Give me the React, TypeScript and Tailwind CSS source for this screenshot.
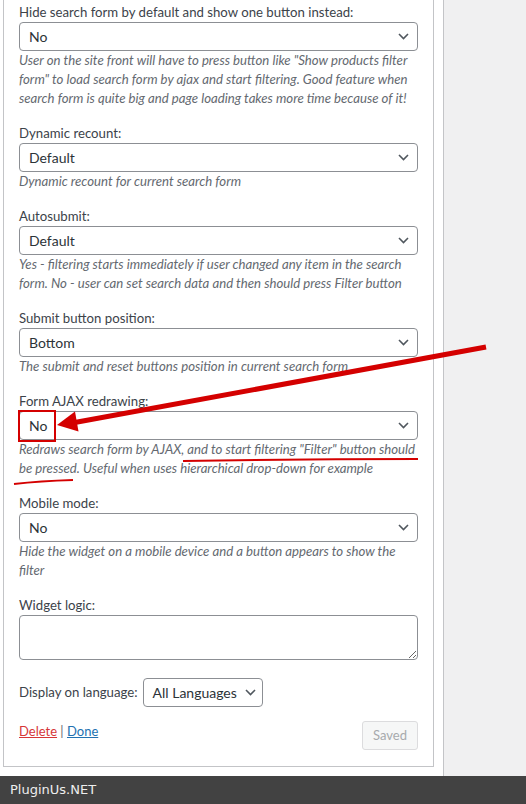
import React from "react";

const font = { fontFamily: 'Lato, "Liberation Sans", Arial, sans-serif' };

function Chevron() {
  return (
    <svg width="11" height="7" viewBox="0 0 11 7" className="shrink-0">
      <path d="M1 1 L5.5 5.5 L10 1" fill="none" stroke="#50575e" strokeWidth="1.6" />
    </svg>
  );
}

function Select({ value, className = "" }: { value: string; className?: string }) {
  return (
    <div
      className={`flex h-[29px] items-center justify-between whitespace-nowrap rounded-[4px] border border-[#8c8f94] bg-white pl-[9px] pr-[8px] text-[14px] text-[#2c3338] ${className}`}
    >
      <span>{value}</span>
      <Chevron />
    </div>
  );
}

function Field({ label, value, lines }: { label: string; value: string; lines: string[] }) {
  return (
    <div className="mb-[15px]">
      <div className="h-5 text-[13.2px] leading-5 text-[#3c434a]">{label}</div>
      <Select value={value} />
      <p className="text-[13.2px] italic leading-[19px] text-[#646970]">
        {lines.map((l, i) => (
          <span key={i} className="block whitespace-nowrap">
            {l}
          </span>
        ))}
      </p>
    </div>
  );
}

export default function App() {
  return (
    <div className="relative flex h-[804px] w-[526px] flex-col overflow-hidden bg-white" style={font}>
      <div className="flex h-[776px]">
        <div className="w-[444px] shrink-0 border-r border-[#c3c4c7] bg-white">
          <div className="ml-[3px] w-[431px] border-x border-b border-[#c3c4c7] bg-white px-[15px] pb-[16px] pt-[2px]">
            <Field
              label="Hide search form by default and show one button instead:"
              value="No"
              lines={[
                'User on the site front will have to press button like "Show products filter',
                'form" to load search form by ajax and start filtering. Good feature when',
                "search form is quite big and page loading takes more time because of it!",
              ]}
            />
            <Field
              label="Dynamic recount:"
              value="Default"
              lines={["Dynamic recount for current search form"]}
            />
            <Field
              label="Autosubmit:"
              value="Default"
              lines={[
                "Yes - filtering starts immediately if user changed any item in the search",
                "form. No - user can set search data and then should press Filter button",
              ]}
            />
            <Field
              label="Submit button position:"
              value="Bottom"
              lines={["The submit and reset buttons position in current search form"]}
            />
            <Field
              label="Form AJAX redrawing:"
              value="No"
              lines={[
                'Redraws search form by AJAX, and to start filtering "Filter" button should',
                "be pressed. Useful when uses hierarchical drop-down for example",
              ]}
            />
            <Field
              label="Mobile mode:"
              value="No"
              lines={["Hide the widget on a mobile device and a button appears to show the", "filter"]}
            />

            <div className="h-5 text-[13.2px] leading-5 text-[#3c434a]">Widget logic:</div>
            <textarea className="block h-[45px] w-full rounded-[4px] border border-[#8c8f94] bg-white" />

            <div className="mt-[18px] flex items-center gap-[5px] text-[13.2px] text-[#3c434a]">
              <span className="whitespace-nowrap">Display on language:</span>
              <Select value="All Languages" className="w-[120px] gap-2" />
            </div>

            <div className="mt-[14px] flex items-start justify-between">
              <div className="text-[13px] leading-5 text-[#646970]">
                <span className="text-[#d63638] underline">Delete</span> |{" "}
                <span className="text-[#2271b1] underline">Done</span>
              </div>
              <button
                disabled
                className="h-[29px] w-[56px] rounded-[3px] border border-[#dcdcde] bg-[#f6f7f7] text-[13px] text-[#a7aaad]"
              >
                Saved
              </button>
            </div>
          </div>
        </div>
        <div className="flex-1 bg-[#f0f0f1]" />
      </div>

      <div
        className="flex h-[28px] items-center bg-[#424242] pl-[10px] text-[13px] text-[#eeeeee]"
        style={{ fontFamily: '"DejaVu Sans", Verdana, sans-serif' }}
      >
        PluginUs.NET
      </div>

      {/* red annotation marks */}
      <svg className="pointer-events-none absolute left-0 top-0" width="526" height="804">
        <line x1="486" y1="347" x2="72" y2="423" stroke="#d40000" strokeWidth="5" />
        <polygon points="57,425 75,411.6 78.5,431.5" fill="#d40000" />
        <rect x="19" y="411" width="36" height="30" fill="none" stroke="#d40000" strokeWidth="2" />
        <path d="M183 461 Q300 459 418 459" fill="none" stroke="#d40000" strokeWidth="2" />
        <path d="M14 484 Q40 481 73 480" fill="none" stroke="#d40000" strokeWidth="2" />
      </svg>
    </div>
  );
}
